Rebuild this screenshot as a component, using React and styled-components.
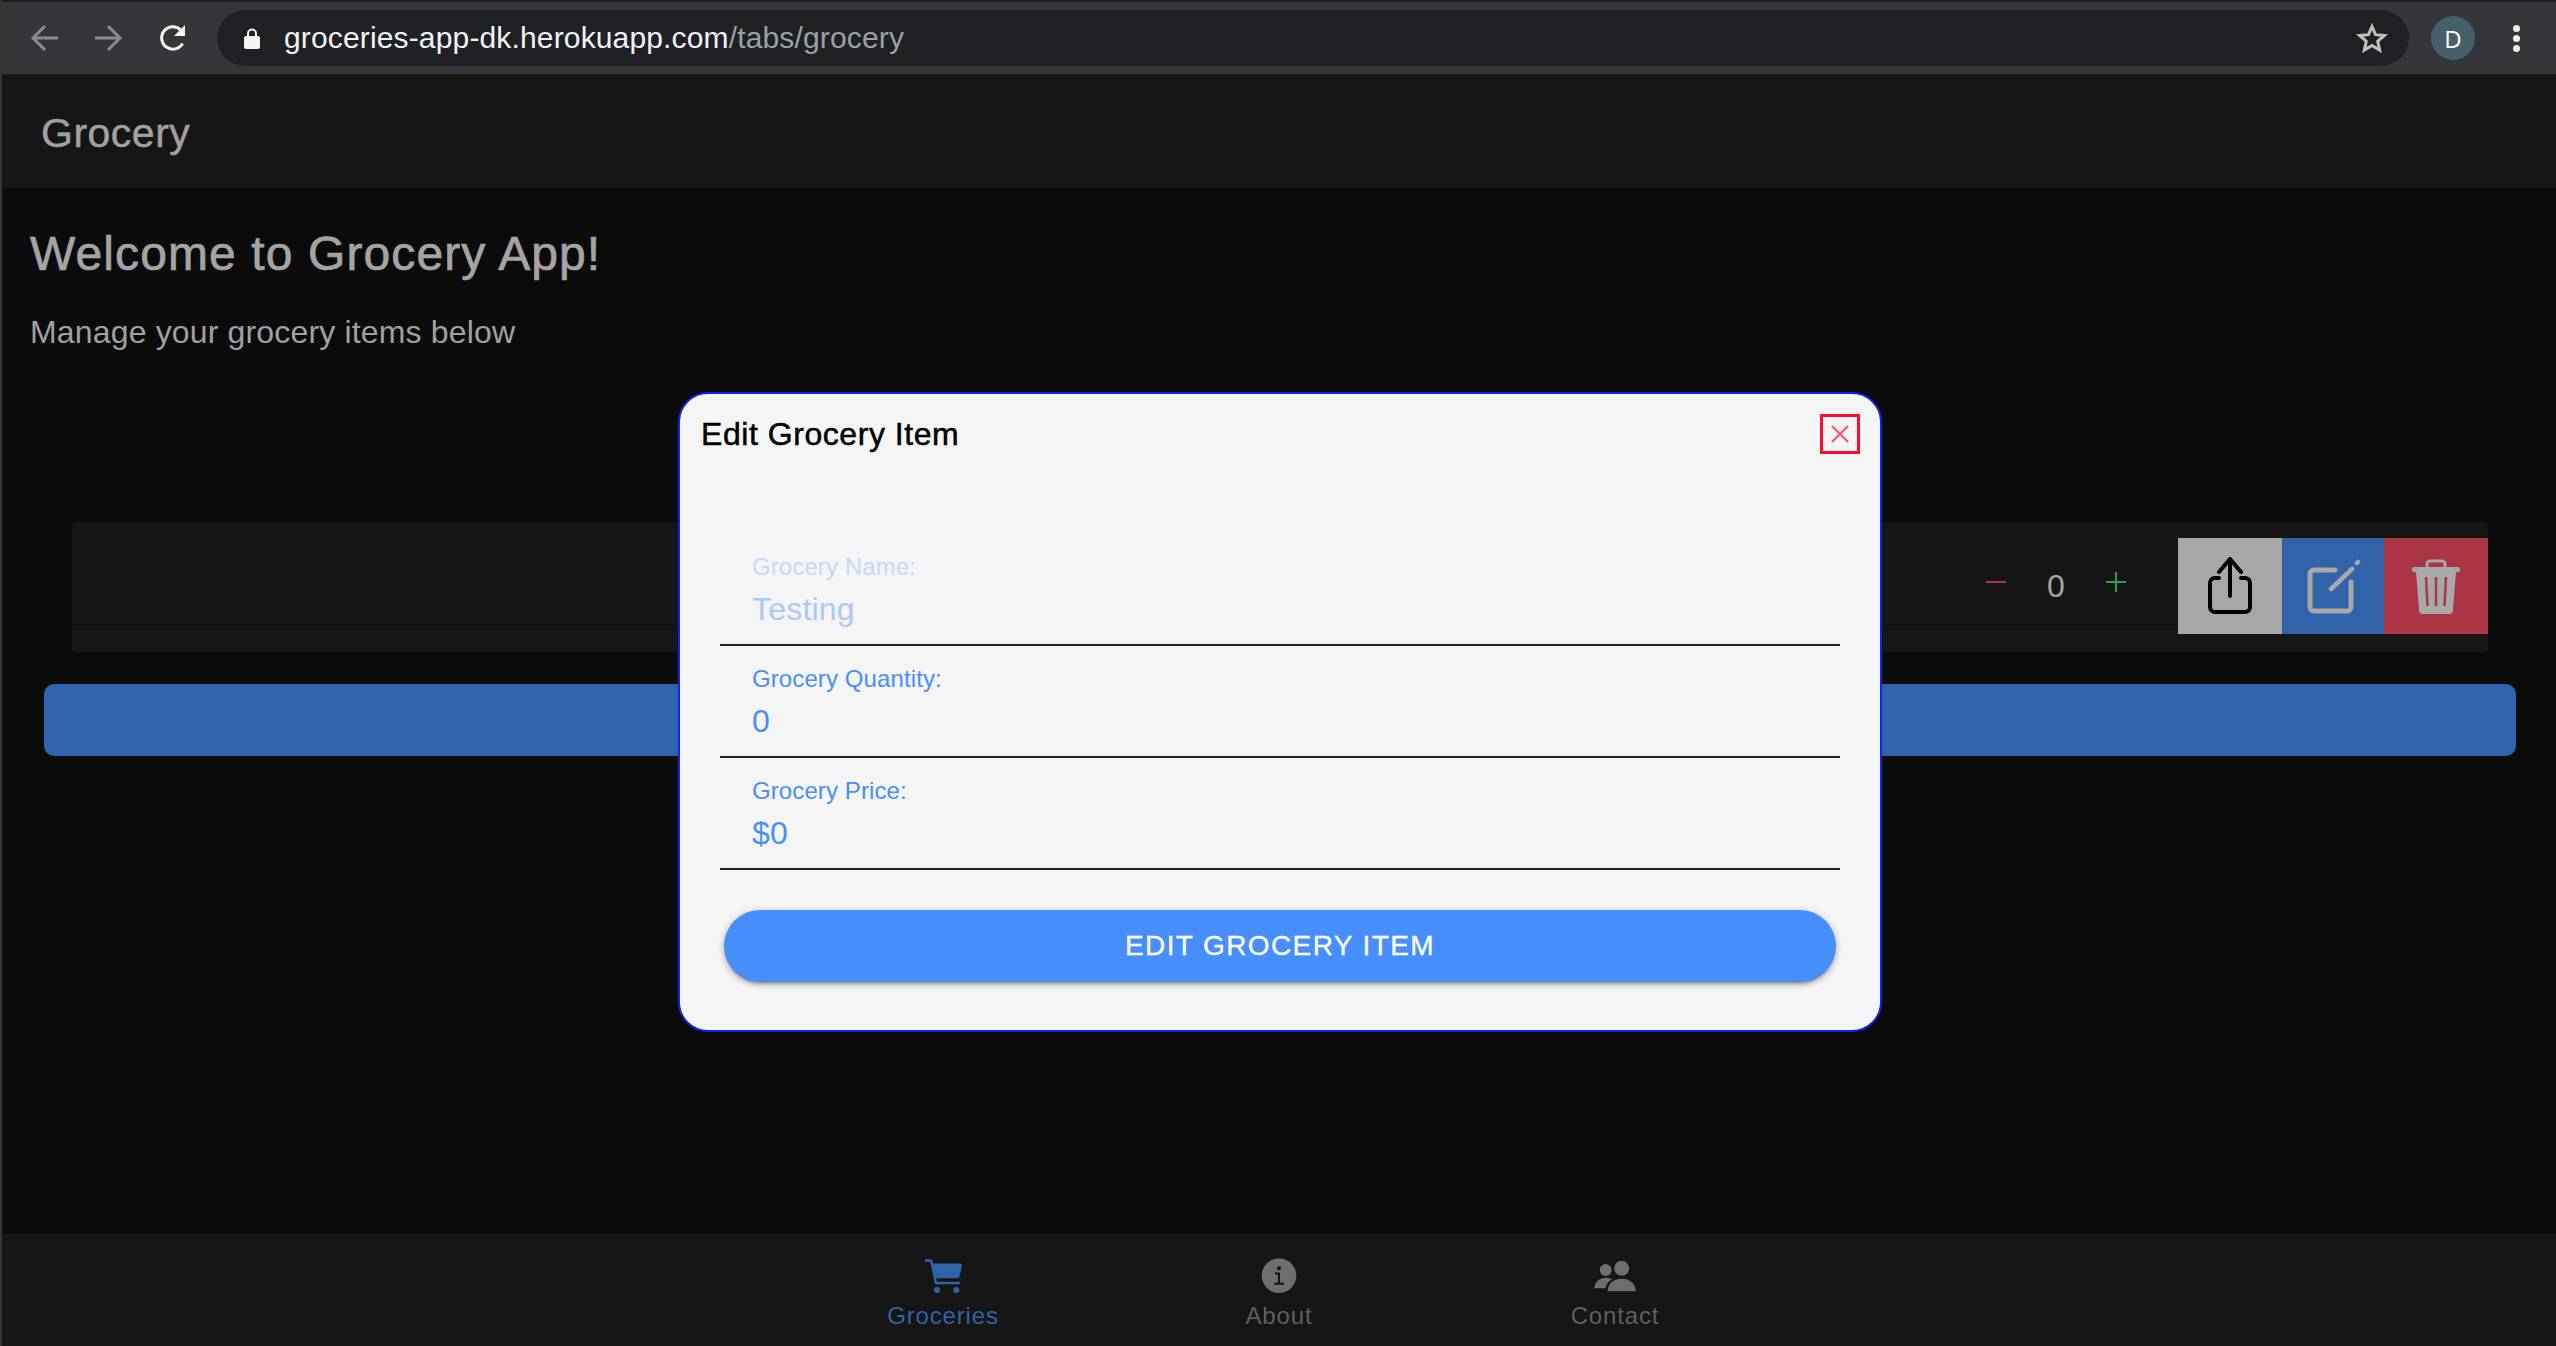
import React from 'react';
import styled, { createGlobalStyle } from 'styled-components';

const Global = createGlobalStyle`
  html, body { margin: 0; padding: 0; height: 100%; background: #0b0b0b; }
  #root { height: 100%; }
  * { box-sizing: border-box; }
  body { font-family: "Liberation Sans", Arial, sans-serif; overflow: hidden; }
`;

const Frame = styled.div`
  width: 2556px; height: 1346px; display: flex; flex-direction: column;
  border-left: 2px solid #353535; background: #0b0b0b;
`;
const Toolbar = styled.header`
  height: 76px; flex: none; display: flex; align-items: center;
  background: #35363a; border-top: 2px solid #202124; border-bottom: 2px solid #1c1c1e;
  padding: 0 36px 0 28px;
`;
const NavGroup = styled.nav`display: flex; align-items: center; gap: 36.5px;`;
const Glyph = styled.svg`display: block; flex: none;`;
const UrlPill = styled.div`
  flex: 1; height: 56px; margin-left: 30px; border-radius: 28px; background: #202124;
  display: flex; align-items: center; padding: 0 21px 0 27px;
`;
const Url = styled.div`
  flex: 1; margin-left: 24px; font-size: 30px; line-height: 56px; color: #f1f3f4; white-space: nowrap;
  letter-spacing: 0.15px;
`;
const UrlPath = styled.span`color: #9aa0a6;`;
const Avatar = styled.div`
  width: 44px; height: 44px; border-radius: 50%; background: #455f6b; color: #fff; margin-left: 22px;
  display: flex; align-items: center; justify-content: center; font: 24px "Open Sans", sans-serif;
`;
const Dots = styled.div`
  margin-left: 38px; display: flex; flex-direction: column; gap: 3px;
`;
const Dot = styled.i`display: block; width: 7px; height: 7px; border-radius: 50%; background: #eceded;`;

const Body = styled.div`flex: 1; min-height: 0; position: relative; display: flex; flex-direction: column;`;
const Header = styled.div`
  height: 112px; flex: none; background: #161616; padding: 3px 0 0 39px; display: flex; align-items: center;
`;
const HeaderTitle = styled.div`
  font-size: 41px; color: #a1a1a1; letter-spacing: 0.5px; -webkit-text-stroke: 0.5px #a1a1a1;
`;
const Content = styled.main`flex: 1; min-height: 0; background: #0b0b0b;`;
const Welcome = styled.h1`
  margin: 42px 0 0 28px; font-size: 48px; line-height: 48px; font-weight: 400; color: #a4a4a4;
  letter-spacing: 1.1px; -webkit-text-stroke: 0.7px #a4a4a4;
`;
const Subtitle = styled.p`
  margin: 34px 0 0 28px; font-size: 32px; line-height: 40px; color: #a0a0a0; letter-spacing: 0.16px;
`;
const Row = styled.section`
  margin: 170px 68px 0 70px; height: 130px; background: #171717; border-radius: 4px;
`;
const RowItem = styled.div`
  height: 110px; padding-top: 16px; background: #151515; border-bottom: 2px solid #1a1a1a;
  border-radius: 4px 4px 0 0; display: flex; justify-content: flex-end;
`;
const Stepper = styled.div`
  height: 96px; display: flex; align-items: center; margin-right: 52px;
`;
const StepIcon = styled.svg`display: block; margin-bottom: 8px;`;
const StepValue = styled.span`
  width: 18px; margin: 0 41px; font-size: 32px; line-height: 36px; color: #a5a5a5; text-align: center;
`;
const Action = styled.button`
  width: ${p => p.$w}px; height: 96px; border: 0; padding: 0; background: ${p => p.$bg};
  display: flex; align-items: center; justify-content: center;
`;
const BlueBar = styled.div`
  margin: 32px 40px 0 42px; height: 72px; border-radius: 10px; background: #3063aa;
`;
const TabBar = styled.footer`
  height: 112px; flex: none; background: #161616; display: flex; justify-content: center;
`;
const Tab = styled.div`
  width: 336px; display: flex; flex-direction: column; align-items: center; padding-top: 22px;
  color: ${p => (p.$active ? '#3063aa' : '#6e6e6e')};
`;
const TabIcon = styled.div`height: 40px; display: flex; align-items: center; justify-content: center;`;
const TabLabel = styled.span`
  margin-top: 6px; font-size: 24px; line-height: 28px; letter-spacing: 0.85px;
  color: ${p => (p.$active ? '#3063aa' : '#5f5f5f')};
`;

const Backdrop = styled.div`
  position: absolute; inset: 0; display: flex; align-items: center; justify-content: center; padding: 2px 0 0 2px;
`;
const Modal = styled.div`
  width: 1204px; height: 640px; background: #f5f5f5; border: 2px solid #1420f0; border-radius: 30px;
  padding: 20px 20px 0 40px; display: flex; flex-direction: column;
`;
const ModalHead = styled.div`
  height: 40px; display: flex; align-items: center; justify-content: space-between; margin-left: -19px;
`;
const ModalTitle = styled.h2`
  margin: 0; font-size: 32px; line-height: 40px; font-weight: 400; color: #000; letter-spacing: 0.55px;
  -webkit-text-stroke: 0.5px #000;
`;
const CloseBox = styled.button`
  width: 40px; height: 40px; border: 3px solid #ff0a2a; background: transparent; padding: 0;
  display: flex; align-items: center; justify-content: center;
`;
const Fields = styled.div`margin: 80px 20px 0 0;`;
const Field = styled.div`
  height: 112px; border-bottom: 2px solid #222; padding-left: 32px;
  display: flex; flex-direction: column; justify-content: flex-end;
`;
const FieldLabel = styled.label`
  font-size: 24px; line-height: 28px; letter-spacing: 0.1px; color: ${p => (p.$muted ? '#c5d9fb' : '#488ffe')};
`;
const FieldValue = styled.div`
  font-size: 32px; line-height: 38px; margin: 9px 0 16px; letter-spacing: 0.2px; color: ${p => (p.$muted ? '#abc9fb' : '#488ffe')};
`;
const Submit = styled.button`
  margin: 40px 24px 0 4px; height: 72px; border: 0; border-radius: 36px; background: #488ffe; color: #fff;
  font: 400 28px "Liberation Sans", sans-serif; letter-spacing: 1.4px; -webkit-text-stroke: 0.3px #fff;
  box-shadow: 0 3px 3px -2px rgba(0,0,0,.3), 0 3px 6px 0 rgba(0,0,0,.2), 0 1px 8px 0 rgba(0,0,0,.12);
`;

const CartIcon = () => (
  <Glyph width="39" height="36" viewBox="14 8 39 36" fill="currentColor">
    <path d="M16 10.500h3.500a2 2 0 0 1 2 1.500L26 33h23" fill="none" stroke="currentColor" strokeWidth="2.500" strokeLinecap="round" />
    <path d="M22.500 13.500H50a2 2 0 0 1 2 2.300L49 28.300H26z" />
    <circle cx="27" cy="40" r="3" />
    <circle cx="46.300" cy="40" r="3" />
  </Glyph>
);
const InfoIcon = () => (
  <Glyph width="36" height="36" viewBox="12 8 36 36">
    <circle cx="30" cy="25.700" r="17.300" fill="currentColor" />
    <circle cx="30" cy="18.300" r="2" fill="#161616" />
    <path d="M26 23.500h4v10M25.500 33.700h9.500" fill="none" stroke="#161616" strokeWidth="2" />
  </Glyph>
);
const PeopleIcon = () => (
  <Glyph width="42" height="32" viewBox="15 10 42 32" fill="currentColor">
    <circle cx="42.700" cy="18.300" r="7.500" />
    <circle cx="26.700" cy="20" r="6" />
    <path d="M28.700 41.300C28.700 33 35 28.700 42.700 28.700S56.700 33 56.700 41.300z" />
    <path d="M15.300 38.300C16 31 21 27.700 26.700 27.700c2.300 0 4.300.5 6.300 1.500-3.500 1.800-6 5.800-6.500 9.100z" />
  </Glyph>
);

export default function App() {
  return (
    <Frame>
      <Global />
      <Toolbar>
        <NavGroup>
          <Glyph width="28" height="28" viewBox="0 0 28 28" fill="none" stroke="#8a8b8e" strokeWidth="3">
            <path d="M28 14H3M15 2L3 14l12 12" />
          </Glyph>
          <Glyph width="28" height="28" viewBox="0 0 28 28" fill="none" stroke="#8a8b8e" strokeWidth="3">
            <path d="M0 14h25M13 2l12 12-12 12" />
          </Glyph>
          <Glyph width="28" height="28" viewBox="0 0 28 28" fill="none">
            <path d="M23.600 19.500A11.200 11.200 0 1 1 22 6.200" stroke="#f1f3f4" strokeWidth="3" />
            <path d="M26 1v11H15z" fill="#f1f3f4" />
          </Glyph>
        </NavGroup>
        <UrlPill>
          <Glyph width="16" height="21" viewBox="0 0 16 21">
            <path d="M4 9V5.500a4 4 0 0 1 8 0V9" fill="none" stroke="#f1f3f4" strokeWidth="2" />
            <rect y="8" width="16" height="13" rx="2" fill="#f1f3f4" />
          </Glyph>
          <Url>groceries-app-dk.herokuapp.com<UrlPath>/tabs/grocery</UrlPath></Url>
          <Glyph width="32" height="32" viewBox="0 0 32 32" fill="none" stroke="#bfc0c2" strokeWidth="3">
            <path d="M16 4.500l3.500 8.200 8.900.8-6.700 5.900 2 8.700-7.700-4.600-7.700 4.600 2-8.700-6.700-5.900 8.900-.8z" />
          </Glyph>
        </UrlPill>
        <Avatar>D</Avatar>
        <Dots><Dot /><Dot /><Dot /></Dots>
      </Toolbar>
      <Body>
        <Header><HeaderTitle>Grocery</HeaderTitle></Header>
        <Content>
          <Welcome>Welcome to Grocery App!</Welcome>
          <Subtitle>Manage your grocery items below</Subtitle>
          <Row>
            <RowItem>
              <Stepper>
                <StepIcon width="20" height="20" viewBox="0 0 20 20"><path d="M0 10h20" stroke="#aa3545" strokeWidth="2" /></StepIcon>
                <StepValue>0</StepValue>
                <StepIcon width="20" height="20" viewBox="0 0 20 20"><path d="M0 10h20M10 0v20" stroke="#2a9d52" strokeWidth="2" /></StepIcon>
              </Stepper>
              <Action $w={104} $bg="#a7a7a9">
                <Glyph width="48" height="60" viewBox="0 0 48 60" fill="none" stroke="#000" strokeWidth="4" strokeLinecap="round" strokeLinejoin="round">
                  <path d="M13 22H9a5 5 0 0 0-5 5v24a5 5 0 0 0 5 5h30a5 5 0 0 0 5-5V27a5 5 0 0 0-5-5h-4" />
                  <path d="M24 3v37M13 16L24 3l11 13" />
                </Glyph>
              </Action>
              <Action $w={102} $bg="#3063aa">
                <Glyph width="56" height="56" viewBox="0 0 56 56" fill="none" stroke="#a8a8a8" strokeLinecap="round">
                  <path d="M30 12H9a4 4 0 0 0-4 4v33a4 4 0 0 0 4 4h33a4 4 0 0 0 4-4V24" strokeWidth="5" />
                  <path d="M26 31L47 11M52 5l1-1" strokeWidth="4.500" />
                </Glyph>
              </Action>
              <Action $w={104} $bg="#aa3545">
                <Glyph width="48" height="56" viewBox="0 0 48 56">
                  <path d="M15 10V6a3 3 0 0 1 3-3h12a3 3 0 0 1 3 3v4" fill="none" stroke="#a8a8a8" strokeWidth="3" />
                  <rect y="9" width="48" height="5" rx="2.500" fill="#a8a8a8" />
                  <path d="M4 14h40l-3 38a4 4 0 0 1-4 4H11a4 4 0 0 1-4-4z" fill="#a8a8a8" />
                  <path d="M14 19l1.500 29M24 19v29M34 19l-1.500 29" stroke="#aa3545" strokeWidth="2.500" />
                </Glyph>
              </Action>
            </RowItem>
          </Row>
          <BlueBar />
        </Content>
        <TabBar>
          <Tab $active><TabIcon><CartIcon /></TabIcon><TabLabel $active>Groceries</TabLabel></Tab>
          <Tab><TabIcon><InfoIcon /></TabIcon><TabLabel>About</TabLabel></Tab>
          <Tab><TabIcon><PeopleIcon /></TabIcon><TabLabel>Contact</TabLabel></Tab>
        </TabBar>
        <Backdrop>
          <Modal>
            <ModalHead>
              <ModalTitle>Edit Grocery Item</ModalTitle>
              <CloseBox aria-label="Close">
                <Glyph width="20" height="20" viewBox="0 0 20 20"><path d="M2 2l16 16M18 2L2 18" stroke="#ff4d68" strokeWidth="2" /></Glyph>
              </CloseBox>
            </ModalHead>
            <Fields>
              <Field>
                <FieldLabel $muted>Grocery Name:</FieldLabel>
                <FieldValue $muted>Testing</FieldValue>
              </Field>
              <Field>
                <FieldLabel>Grocery Quantity:</FieldLabel>
                <FieldValue>0</FieldValue>
              </Field>
              <Field>
                <FieldLabel>Grocery Price:</FieldLabel>
                <FieldValue>$0</FieldValue>
              </Field>
            </Fields>
            <Submit>EDIT GROCERY ITEM</Submit>
          </Modal>
        </Backdrop>
      </Body>
    </Frame>
  );
}
